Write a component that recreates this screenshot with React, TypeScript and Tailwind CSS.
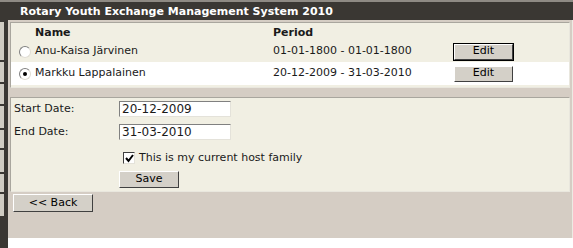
import React from "react";

type Row = { name: string; period: string; checked: boolean; focused: boolean };

const rows: Row[] = [
  { name: "Anu-Kaisa Järvinen", period: "01-01-1800 - 01-01-1800", checked: false, focused: true },
  { name: "Markku Lappalainen", period: "20-12-2009 - 31-03-2010", checked: true, focused: false },
];

const Radio = ({ checked }: { checked: boolean }) => (
  <div className="w-[12px] h-[12px] rounded-full border border-t-[#808080] border-l-[#808080] border-r-[#e0ddd4] border-b-[#e0ddd4] bg-white flex items-center justify-center">
    {checked && <div className="w-[4px] h-[4px] rounded-full bg-black" />}
  </div>
);

const Btn = ({ label, w, h, focused }: { label: string; w: string; h: string; focused?: boolean }) => (
  <div
    className={`${w} ${h} bg-[#d4d0c8] flex items-center justify-center text-[11px] text-black border border-t-[#ffffff] border-l-[#ffffff] border-r-[#404040] border-b-[#404040] ${focused ? "outline outline-1 outline-black" : ""}`}
  >
    {label}
  </div>
);

const SideTabs = () => (
  <div className="w-[8px] flex bg-[#3a3733]">
    <div className="w-[4px] flex flex-col pt-[2px]">
      {[40, 22, 22, 24, 20, 24, 20, 24].map((h, i) => (
        <div key={i} className="bg-[#cfcbc2] border-b-2 border-[#3a3733]" style={{ height: h }} />
      ))}
    </div>
  </div>
);

export default function App() {
  return (
    <div className="w-[573px] h-[248px] bg-white font-['DejaVu_Sans',Verdana,sans-serif] text-[11px] text-[#1a1a1a] flex flex-col overflow-hidden">
      <div className="h-[2px] bg-[#8e8a84]" />
      <div className="h-[18px] bg-[#3a3733] text-white font-bold text-[11px] pl-[20px] pt-[2px] flex items-center">
        Rotary Youth Exchange Management System 2010
      </div>
      <div className="flex h-[218px]">
        <SideTabs />
        <div className="flex-1 bg-[#d5cdc4] pl-[2px] pr-[2px] pt-[2px] flex flex-col border-r border-[#ecebe3]">
          <div className="bg-[#f1efe3] border border-[#a9a69e] border-r-[#e9e7de] border-b-[#e9e7de] pb-[2px]">
            <div className="flex h-[18px] items-end font-bold text-[11px]">
              <div className="w-[24px]" />
              <div className="w-[238px]">Name</div>
              <div>Period</div>
            </div>
            {rows.map((r, i) => (
              <div
                key={i}
                className={`flex items-center ${i === 0 ? "h-[21px] bg-[#f1efe3]" : "h-[23px] bg-white"}`}
              >
                <div className="w-[24px] flex justify-center pl-[3px]">
                  <Radio checked={r.checked} />
                </div>
                <div className="w-[238px]">{r.name}</div>
                <div className="w-[181px]">{r.period}</div>
                <Btn label="Edit" w="w-[59px]" h="h-[16px]" focused={r.focused} />
              </div>
            ))}
          </div>
          <div className="h-[9px]" />
          <div className="bg-[#f1efe3] border border-[#a9a69e] border-r-[#e9e7de] border-b-[#e9e7de] h-[95px] pt-[3px] pl-[3px] flex flex-col">
            <div className="flex items-center h-[16px]">
              <div className="w-[105px]">Start Date:</div>
              <div className="w-[112px] h-[16px] bg-white border border-t-[#808080] border-l-[#808080] border-r-[#e4e2da] border-b-[#e4e2da] pl-[2px] text-[12px] leading-[14px]">
                20-12-2009
              </div>
            </div>
            <div className="flex items-center h-[16px] mt-[7px]">
              <div className="w-[105px]">End Date:</div>
              <div className="w-[112px] h-[16px] bg-white border border-t-[#808080] border-l-[#808080] border-r-[#e4e2da] border-b-[#e4e2da] pl-[2px] text-[12px] leading-[14px]">
                31-03-2010
              </div>
            </div>
            <div className="flex items-center mt-[10px] pl-[109px]">
              <div className="w-[12px] h-[12px] bg-white border border-t-[#404040] border-l-[#404040] border-r-[#e4e2da] border-b-[#e4e2da] flex items-center justify-center">
                <svg width="9" height="9" viewBox="0 0 9 9">
                  <path d="M1 4 L3.5 7 L8 1" stroke="#000" strokeWidth="2" fill="none" />
                </svg>
              </div>
              <div className="ml-[4px]">This is my current host family</div>
            </div>
            <div className="pl-[105px] mt-[4px]">
              <Btn label="Save" w="w-[60px]" h="h-[17px]" />
            </div>
          </div>
          <div className="pl-[3px] mt-[2px]">
            <Btn label="<< Back" w="w-[80px]" h="h-[18px]" />
          </div>
        </div>
      </div>
      <div className="flex flex-1">
        <div className="w-[8px] bg-[#3a3733]" />
        <div className="flex-1 bg-white" />
      </div>
    </div>
  );
}
